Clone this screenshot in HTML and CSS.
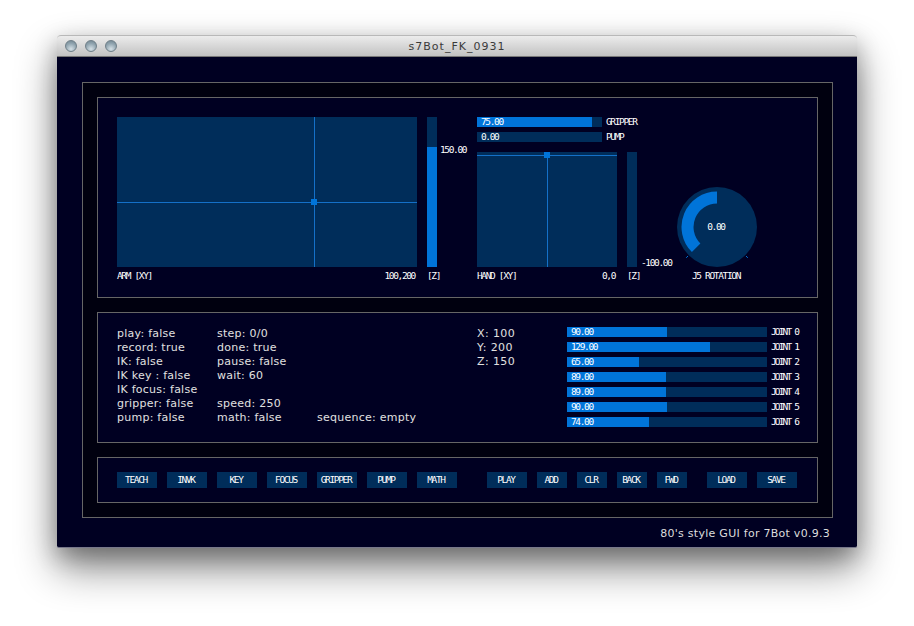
FILE: index.html
```html
<!DOCTYPE html>
<html>
	<head>
		<meta charset="utf-8">
		<title>s7Bot_FK_0931</title>
		<link rel="stylesheet" href="styles.css">
	</head>
	<body>
		<div class="window">
			<div class="titlebar">
				<div class="lights"><i></i><i></i><i></i></div>
				<div class="title">s7Bot_FK_0931</div>
			</div>
			<div class="content">
				<div class="frame">
					<div class="panel panel-top">
						<div class="arm">
							<div class="pad arm-pad">
								<i class="line-v"></i><i class="line-h"></i><i class="handle"></i>
							</div>
							<div class="cap"><span>ARM [XY]</span><span>100,200</span></div>
						</div>
						<div class="zgroup">
							<div class="vbar tall"><div class="vfill" style="height:120px"></div><span class="vval val-arm">150.00</span></div>
							<div class="cap"><span>[Z]</span></div>
						</div>
						<div class="hand">
							<div class="slider short"><div class="fill" style="width:115px"></div><span class="val">75.00</span><span class="lbl">GRIPPER</span></div>
							<div class="slider short"><span class="val">0.00</span><span class="lbl">PUMP</span></div>
							<div class="hand-row">
								<div class="hand-xy">
									<div class="pad hand-pad">
										<i class="line-v"></i><i class="line-h"></i><i class="handle"></i>
									</div>
									<div class="cap"><span>HAND [XY]</span><span>0,0</span></div>
								</div>
								<div class="zgroup">
									<div class="vbar small"><span class="vval val-hand">-100.00</span></div>
									<div class="cap"><span>[Z]</span></div>
								</div>
								<div class="knob">
									<svg width="80" height="80" viewBox="0 0 80 80">
										<circle cx="40" cy="40" r="40" fill="#002d5a"/>
										<path d="M40 4.5A35.5 35.5 0 0 0 14.9 65.1L23.4 56.6A23.5 23.5 0 0 1 40 16.5Z" fill="#0074d9"/>
										<path d="M9.2 70.8L11 69M70.8 70.8L69 69" stroke="#0074d9" stroke-width="1"/>
									</svg>
									<span class="knob-val">0.00</span>
									<div class="cap cap-center"><span>J5 ROTATION</span></div>
								</div>
							</div>
						</div>
					</div>

					<div class="panel panel-mid">
						<div class="status">
							<div>play: false</div>
							<div>record: true</div>
							<div>IK: false</div>
							<div>IK key : false</div>
							<div>IK focus: false</div>
							<div>gripper: false</div>
							<div>pump: false</div>
						</div>
						<div class="status">
							<div>step: 0/0</div>
							<div>done: true</div>
							<div>pause: false</div>
							<div>wait: 60</div>
							<div>&nbsp;</div>
							<div>speed: 250</div>
							<div>math: false</div>
						</div>
						<div class="status seq">
							<div>sequence: empty</div>
						</div>
						<div class="status coords">
							<div>X: 100</div>
							<div>Y: 200</div>
							<div>Z: 150</div>
						</div>
						<div class="joints">
							<div class="slider long"><div class="fill" style="width:100px"></div><span class="val">90.00</span><span class="lbl">JOINT 0</span></div>
							<div class="slider long"><div class="fill" style="width:143px"></div><span class="val">129.00</span><span class="lbl">JOINT 1</span></div>
							<div class="slider long"><div class="fill" style="width:72px"></div><span class="val">65.00</span><span class="lbl">JOINT 2</span></div>
							<div class="slider long"><div class="fill" style="width:99px"></div><span class="val">89.00</span><span class="lbl">JOINT 3</span></div>
							<div class="slider long"><div class="fill" style="width:99px"></div><span class="val">89.00</span><span class="lbl">JOINT 4</span></div>
							<div class="slider long"><div class="fill" style="width:100px"></div><span class="val">90.00</span><span class="lbl">JOINT 5</span></div>
							<div class="slider long"><div class="fill" style="width:82px"></div><span class="val">74.00</span><span class="lbl">JOINT 6</span></div>
						</div>
					</div>

					<div class="panel panel-btns">
						<div class="btn">TEACH</div>
						<div class="btn">INVK</div>
						<div class="btn">KEY</div>
						<div class="btn">FOCUS</div>
						<div class="btn">GRIPPER</div>
						<div class="btn">PUMP</div>
						<div class="btn">MATH</div>
						<div class="btn play">PLAY</div>
						<div class="btn narrow">ADD</div>
						<div class="btn narrow">CLR</div>
						<div class="btn narrow">BACK</div>
						<div class="btn narrow">FWD</div>
						<div class="btn load">LOAD</div>
						<div class="btn">SAVE</div>
					</div>
				</div>
				<div class="footer">80's style GUI for 7Bot v0.9.3</div>
			</div>
		</div>
	</body>
</html>
```

FILE: styles.css
```css
*{
	margin:0;
	padding:0;
	box-sizing:border-box;
}
html,body{
	height:626px;
	overflow:hidden;
}
body{
	background:#fff;
	padding:35px 0 0 57px;
	font-family:"DejaVu Sans Mono","Liberation Mono",monospace;
}
.window{
	width:800px;
	height:513px;
	border-radius:4px 4px 2px 2px;
	box-shadow:0 20px 40px rgba(0,0,0,.48),0 8px 22px rgba(0,0,0,.25);
}

/* title bar */
.titlebar{
	position:relative;
	height:22px;
	display:flex;
	align-items:center;
	justify-content:center;
	background-image:linear-gradient(#ececec,#c2c2c2);
	border-top:1px solid #b8b8b8;
	border-bottom:1px solid #777;
	border-radius:4px 4px 0 0;
}
.lights{
	position:absolute;
	left:8px;
	top:4px;
	display:flex;
	gap:8px;
}
.lights i{
	width:12px;
	height:12px;
	border-radius:50%;
	border:1px solid #6f7f88;
	background-image:radial-gradient(circle at 50% 80%,#d5e0e6,#8fa3ae 60%,#6f838e);
}
.title{
	font-family:"DejaVu Sans",sans-serif;
	font-size:11px;
	letter-spacing:1px;
	color:#3a3a3a;
}

/* main area */
.content{
	height:491px;
	background:#000022;
	padding:25px 0 0 25px;
	border-bottom:1px solid #77778a;
	border-radius:0 0 2px 2px;
}
.frame{
	width:751px;
	height:436px;
	background:#00000f;
	border:1px solid #666;
	padding:14px;
	display:flex;
	flex-direction:column;
	gap:14px;
}
.panel{
	width:721px;
	background:#000022;
	border:1px solid #666;
	padding:19px;
	display:flex;
}
.panel-top{
	height:201px;
}
.panel-mid{
	height:131px;
	padding-top:14px;
}
.panel-btns{
	height:46px;
	padding-top:14px;
	gap:10px;
}
.footer{
	font-family:"DejaVu Sans",sans-serif;
	font-size:11px;
	letter-spacing:.27px;
	color:#ddd;
	width:748px;
	text-align:right;
	margin-top:9px;
}

/* controls */
.pad{
	position:relative;
	background:#002d5a;
}
.pad i{
	position:absolute;
}
.line-v{
	width:1px;
	top:0;
	bottom:0;
	background:#1470c8;
}
.line-h{
	height:1px;
	left:0;
	right:0;
	background:#1470c8;
}
.handle{
	width:6px;
	height:6px;
	background:#0074d9;
}
.arm{
	width:300px;
}
.arm-pad{
	height:150px;
}
.arm-pad .line-v{left:197px;}
.arm-pad .line-h{top:85px;}
.arm-pad .handle{left:194px;top:82px;}
.hand-pad{
	width:140px;
	height:115px;
}
.hand-pad .line-v{left:70px;}
.hand-pad .line-h{top:3px;}
.hand-pad .handle{left:67px;top:0;}

.cap{
	display:flex;
	justify-content:space-between;
	height:14px;
	padding-right:2px;
	line-height:17px;
	font-size:9.5px;
	letter-spacing:-1.35px;
	color:#fff;
	white-space:nowrap;
}
.cap-center{
	justify-content:center;
}
.zgroup{
	width:10px;
	margin-left:10px;
}
.vbar{
	position:relative;
	display:flex;
	align-items:flex-end;
	width:10px;
	background:#002d5a;
}
.tall{height:150px;}
.small{height:115px;}
.vfill{
	width:10px;
	background:#0074d9;
}
.vval{
	position:absolute;
	left:13px;
	font-size:9.5px;
	letter-spacing:-1.35px;
	line-height:10px;
	color:#fff;
	white-space:nowrap;
}
.val-arm{top:28px;}
.val-hand{bottom:-1px;left:14px;}

.hand{
	margin-left:40px;
	width:300px;
}
.slider{
	position:relative;
	height:10px;
	background:#002d5a;
	margin-bottom:5px;
	display:flex;
	font-size:9.5px;
	letter-spacing:-1.35px;
	line-height:10px;
	color:#fff;
	white-space:nowrap;
}
.short{width:125px;}
.long{width:200px;}
.long .lbl{letter-spacing:-1.85px;}
.fill{
	position:absolute;
	left:0;
	top:0;
	height:10px;
	background:#0074d9;
}
.val{
	position:relative;
	margin-left:4px;
}
.lbl{
	position:absolute;
	left:100%;
	margin-left:4px;
}
.hand-row{
	display:flex;
	margin-top:10px;
}
.hand-xy{
	width:140px;
}
.knob{
	position:relative;
	width:80px;
	margin:35px 0 0 40px;
}
.knob svg{
	display:block;
}
.knob-val{
	position:absolute;
	left:0;
	width:80px;
	top:35px;
	padding-right:2px;
	text-align:center;
	font-size:9.5px;
	letter-spacing:-1.35px;
	line-height:10px;
	color:#fff;
}

/* status text */
.status{
	width:100px;
	font-family:"DejaVu Sans",sans-serif;
	font-size:11px;
	letter-spacing:.25px;
	line-height:14px;
	color:#e0e0e0;
	white-space:nowrap;
}
.seq{
	width:160px;
	padding-top:84px;
}
.coords{
	width:90px;
	letter-spacing:.4px;
}
.joints{
	width:200px;
}

/* buttons */
.btn{
	width:40px;
	height:16px;
	padding-right:2px;
	background:#002d5a;
	color:#fff;
	font-size:9.5px;
	letter-spacing:-1.35px;
	line-height:16px;
	text-align:center;
}
.narrow{width:30px;}
.play{margin-left:20px;}
.load{margin-left:10px;}
```
